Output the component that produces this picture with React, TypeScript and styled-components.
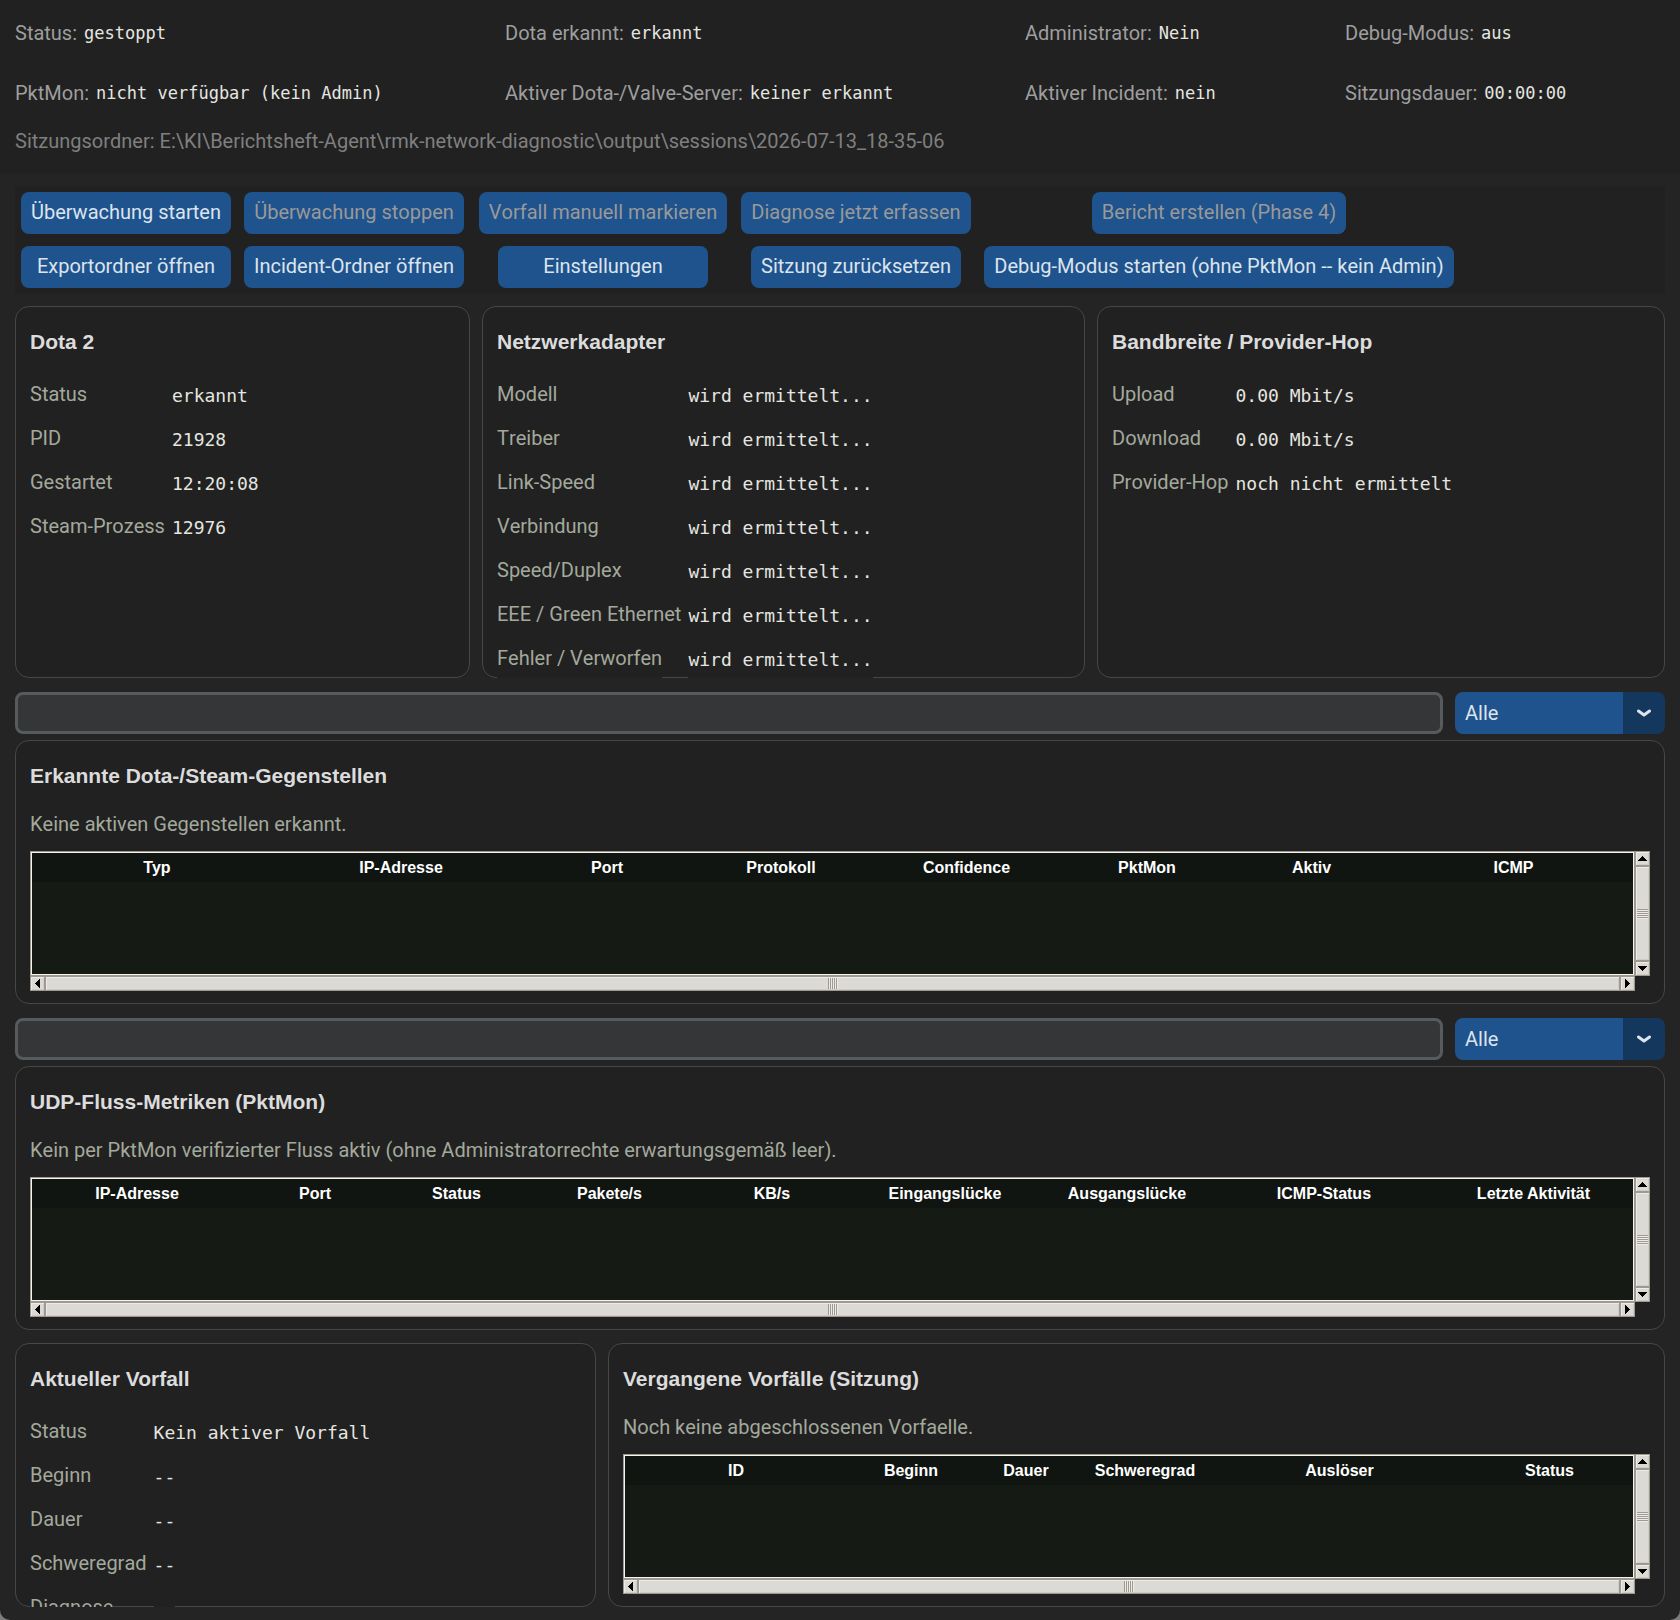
import React from "react";
import styled, { createGlobalStyle } from "styled-components";

const color = {
  desktop: "#7d7d7d",
  window: "#242424",
  frame: "#212121",
  cardBorder: "#474747",
  label: "#9e9e9e",
  path: "#7f7f7f",
  cardLabel: "#a3a99c",
  title: "#dcdcdc",
  value: "#e6e6e0",
  button: "#1f538d",
  buttonDark: "#14375e",
  buttonText: "#dce4ee",
  disabledText: "#999999",
  field: "#343638",
  fieldBorder: "#565b5e",
  tableHead: "#101511",
  tableBody: "#161a14",
  tableEdge: "#f6f3ec",
  bevel: "#9e9a91",
  bevelLight: "#eeebe7",
  bevelShade: "#cfcdc8",
  thumb: "#dcdad5",
};

const GlobalStyle = createGlobalStyle`
  *, *::before, *::after { box-sizing: border-box; }
  html, body { margin: 0; background: ${color.desktop}; }
  body, button, input, select {
    font-family: Roboto, "Liberation Sans", sans-serif;
    font-size: 20px;
    font-kerning: none;
  }
`;

const Window = styled.main`
  min-height: 100vh;
  padding-bottom: 12px;
  background: ${color.window};
  border-radius: 0 0 10px 10px;
`;

const StatusHeader = styled.header`
  padding: 3px 15px 15px;
  background: ${color.frame};
`;

const StatusGrid = styled.dl`
  display: grid;
  grid-template-columns: 490fr 520fr 320fr 320fr;
  grid-auto-rows: 60px;
  margin: 0;
`;

const StatusItem = styled.div`
  display: flex;
  align-items: center;
  gap: 7px;
  white-space: nowrap;
  dt { color: ${color.label}; }
  dd {
    margin: 0;
    color: ${color.value};
    font-family: "DejaVu Sans Mono", monospace;
    font-size: 17px;
  }
`;

const SessionPath = styled.p`
  margin: 0;
  line-height: 36px;
  color: ${color.path};
`;

const Content = styled.div`
  padding: 12px 15px 0;
`;

const Toolbar = styled.div`
  display: grid;
  grid-template-columns: 210px 222px 252px 230px 472px;
  grid-auto-rows: 42px;
  gap: 12px;
  justify-content: start;
  justify-items: center;
  padding: 6px;
  background: ${color.frame};
`;

const ToolButton = styled.button`
  min-width: 210px;
  padding: 0 10px 2px;
  border: 0;
  border-radius: 8px;
  background: ${color.button};
  color: ${color.buttonText};
  white-space: nowrap;
  &:disabled { color: ${color.disabledText}; }
`;

const CardRow = styled.div<{ $columns: string; $top: number }>`
  display: grid;
  grid-template-columns: ${(p) => p.$columns};
  gap: 12px;
  margin-top: ${(p) => p.$top}px;
`;

const Card = styled.section<{ $height: number }>`
  display: flex;
  flex-direction: column;
  min-width: 0;
  height: ${(p) => p.$height}px;
  padding: 14px 14px 0;
  border: 1px solid ${color.cardBorder};
  border-radius: 14px;
  background: ${color.frame};
`;

const CardTitle = styled.h2`
  margin: 0;
  color: ${color.title};
  font: bold 21px/42px "Liberation Sans", Arial, sans-serif;
`;

const FactList = styled.dl`
  flex: 1;
  min-height: 0;
  overflow: hidden;
  display: grid;
  grid-template-columns: auto 1fr;
  grid-auto-rows: 42px;
  gap: 2px 7px;
  justify-items: start;
  align-content: start;
  margin: 10px 0 -1px;
  line-height: 42px;
  white-space: nowrap;
  dt {
    background: ${color.frame};
    color: ${color.cardLabel};
  }
  dd {
    margin: 0;
    padding-top: 2px;
    background: ${color.frame};
    color: ${color.value};
    font: 18px/42px "DejaVu Sans Mono", monospace;
  }
`;

const Note = styled.p`
  margin: 6px 0;
  line-height: 42px;
  color: ${color.cardLabel};
`;

const FilterRow = styled.div`
  display: flex;
  gap: 12px;
  margin: 14px 0 6px;
`;

const FilterInput = styled.input`
  flex: 1;
  min-width: 0;
  height: 42px;
  padding: 0 10px;
  border: 3px solid ${color.fieldBorder};
  border-radius: 8px;
  background: ${color.field};
  color: ${color.buttonText};
`;

const SelectBox = styled.div`
  position: relative;
  width: 210px;
  height: 42px;
  svg {
    position: absolute;
    right: 14px;
    top: 17px;
    pointer-events: none;
  }
`;

const Select = styled.select`
  appearance: none;
  width: 100%;
  height: 100%;
  padding: 0 52px 0 10px;
  border: 0;
  border-radius: 8px;
  background: linear-gradient(to left, ${color.buttonDark} 42px, ${color.button} 42px);
  color: ${color.buttonText};
`;

const TreeGrid = styled.div`
  display: grid;
  grid-template-columns: 1fr 15px;
  grid-template-rows: 125px 15px;
`;

const TreeFrame = styled.div`
  border: 1px solid ${color.bevel};
  box-shadow: inset 0 0 0 1px ${color.tableEdge};
  padding: 1px;
  background: ${color.tableBody} content-box;
`;

const Tree = styled.table`
  width: 100%;
  table-layout: fixed;
  border-collapse: collapse;
  th {
    height: 29px;
    padding: 0;
    background: ${color.tableHead};
    color: #ffffff;
    font: bold 16px "Liberation Sans", Arial, sans-serif;
    text-align: center;
  }
`;

const ScrollTrack = styled.div<{ $vertical?: boolean }>`
  display: grid;
  ${(p) => (p.$vertical ? "grid-template-rows" : "grid-template-columns")}: 15px 1fr 15px;
`;

const ScrollPart = styled.button`
  display: flex;
  align-items: center;
  justify-content: center;
  min-width: 0;
  padding: 0;
  border: 1px solid ${color.bevel};
  background: ${color.thumb};
  box-shadow: inset 1px 1px 0 ${color.bevelLight}, inset -1px -1px 0 ${color.bevelShade};
`;

const Grip = styled.span<{ $vertical?: boolean }>`
  width: ${(p) => (p.$vertical ? 11 : 10)}px;
  height: ${(p) => (p.$vertical ? 10 : 11)}px;
  background: repeating-linear-gradient(
    ${(p) => (p.$vertical ? "to bottom" : "to right")},
    ${color.bevel} 0 1px,
    ${color.bevelLight} 1px 2px
  );
`;

const arrows = {
  up: "M4 0h1v1h1v1h1v1h1v1h1v1H0V4h1V3h1V2h1V1h1z",
  down: "M0 0h9v1H8v1H7v1H6v1H5v1H4V4H3V3H2V2H1V1H0z",
  left: "M0 4h1V3h1V2h1V1h1V0h1v9H4V8H3V7H2V6H1V5H0z",
  right: "M0 0h1v1h1v1h1v1h1v1h1v1H4v1H3v1H2v1H1v1H0z",
};

function Arrow({ dir }: { dir: keyof typeof arrows }) {
  const vertical = dir === "up" || dir === "down";
  return (
    <svg width={vertical ? 9 : 5} height={vertical ? 5 : 9} shapeRendering="crispEdges" aria-hidden="true">
      <path d={arrows[dir]} fill="#000" />
    </svg>
  );
}

function ScrollBar({ vertical }: { vertical?: boolean }) {
  return (
    <ScrollTrack $vertical={vertical}>
      <ScrollPart type="button" aria-label={vertical ? "Nach oben" : "Nach links"}>
        <Arrow dir={vertical ? "up" : "left"} />
      </ScrollPart>
      <ScrollPart as="div">
        <Grip $vertical={vertical} />
      </ScrollPart>
      <ScrollPart type="button" aria-label={vertical ? "Nach unten" : "Nach rechts"}>
        <Arrow dir={vertical ? "down" : "right"} />
      </ScrollPart>
    </ScrollTrack>
  );
}

type Column = [name: string, width: number];

function TreeView({ columns }: { columns: Column[] }) {
  const total = columns.reduce((sum, [, width]) => sum + width, 0);
  return (
    <TreeGrid>
      <TreeFrame>
        <Tree>
          <colgroup>
            {columns.map(([name, width]) => (
              <col key={name} style={{ width: `${(width / total) * 100}%` }} />
            ))}
          </colgroup>
          <thead>
            <tr>
              {columns.map(([name]) => (
                <th key={name} scope="col">{name}</th>
              ))}
            </tr>
          </thead>
        </Tree>
      </TreeFrame>
      <ScrollBar vertical />
      <ScrollBar />
    </TreeGrid>
  );
}

function Filter({ label }: { label: string }) {
  return (
    <FilterRow>
      <FilterInput type="text" aria-label={`${label} filtern`} />
      <SelectBox>
        <Select aria-label={`${label}: Auswahl`} defaultValue="Alle">
          <option>Alle</option>
        </Select>
        <svg width="14" height="9" viewBox="0 0 14 9" aria-hidden="true">
          <path d="M1.5 2 L7 6 L12.5 2" fill="none" stroke={color.buttonText} strokeWidth="3" strokeLinecap="round" strokeLinejoin="round" />
        </svg>
      </SelectBox>
    </FilterRow>
  );
}

type Fact = [label: string, value: string];

function FactCard({ title, facts, height }: { title: string; facts: Fact[]; height: number }) {
  return (
    <Card $height={height}>
      <CardTitle>{title}</CardTitle>
      <FactList>
        {facts.map(([label, value]) => (
          <React.Fragment key={label}>
            <dt>{label}</dt>
            <dd>{value}</dd>
          </React.Fragment>
        ))}
      </FactList>
    </Card>
  );
}

function TreeCard({ title, note, columns }: { title: string; note: string; columns: Column[] }) {
  return (
    <Card $height={264}>
      <CardTitle>{title}</CardTitle>
      <Note>{note}</Note>
      <TreeView columns={columns} />
    </Card>
  );
}

const status: Fact[] = [
  ["Status:", "gestoppt"],
  ["Dota erkannt:", "erkannt"],
  ["Administrator:", "Nein"],
  ["Debug-Modus:", "aus"],
  ["PktMon:", "nicht verfügbar (kein Admin)"],
  ["Aktiver Dota-/Valve-Server:", "keiner erkannt"],
  ["Aktiver Incident:", "nein"],
  ["Sitzungsdauer:", "00:00:00"],
];

const actions: [text: string, disabled: boolean][] = [
  ["Überwachung starten", false],
  ["Überwachung stoppen", true],
  ["Vorfall manuell markieren", true],
  ["Diagnose jetzt erfassen", true],
  ["Bericht erstellen (Phase 4)", true],
  ["Exportordner öffnen", false],
  ["Incident-Ordner öffnen", false],
  ["Einstellungen", false],
  ["Sitzung zurücksetzen", false],
  ["Debug-Modus starten (ohne PktMon -- kein Admin)", false],
];

const pending = "wird ermittelt...";

const dotaFacts: Fact[] = [
  ["Status", "erkannt"],
  ["PID", "21928"],
  ["Gestartet", "12:20:08"],
  ["Steam-Prozess", "12976"],
];

const adapterFacts: Fact[] = [
  ["Modell", pending],
  ["Treiber", pending],
  ["Link-Speed", pending],
  ["Verbindung", pending],
  ["Speed/Duplex", pending],
  ["EEE / Green Ethernet", pending],
  ["Fehler / Verworfen", pending],
];

const bandwidthFacts: Fact[] = [
  ["Upload", "0.00 Mbit/s"],
  ["Download", "0.00 Mbit/s"],
  ["Provider-Hop", "noch nicht ermittelt"],
];

const incidentFacts: Fact[] = [
  ["Status", "Kein aktiver Vorfall"],
  ["Beginn", "--"],
  ["Dauer", "--"],
  ["Schweregrad", "--"],
  ["Diagnose", "--"],
];

const peerColumns: Column[] = [
  ["Typ", 250],
  ["IP-Adresse", 238],
  ["Port", 174],
  ["Protokoll", 174],
  ["Confidence", 197],
  ["PktMon", 164],
  ["Aktiv", 165],
  ["ICMP", 239],
];

const flowColumns: Column[] = [
  ["IP-Adresse", 210],
  ["Port", 146],
  ["Status", 137],
  ["Pakete/s", 169],
  ["KB/s", 156],
  ["Eingangslücke", 190],
  ["Ausgangslücke", 174],
  ["ICMP-Status", 220],
  ["Letzte Aktivität", 199],
];

const historyColumns: Column[] = [
  ["ID", 222],
  ["Beginn", 128],
  ["Dauer", 102],
  ["Schweregrad", 136],
  ["Auslöser", 253],
  ["Status", 167],
];

export default function App() {
  return (
    <>
      <GlobalStyle />
      <Window>
        <StatusHeader>
          <StatusGrid>
            {status.map(([label, value]) => (
              <StatusItem key={label}>
                <dt>{label}</dt>
                <dd>{value}</dd>
              </StatusItem>
            ))}
          </StatusGrid>
          <SessionPath>
            {"Sitzungsordner: E:\\KI\\Berichtsheft-Agent\\rmk-network-diagnostic\\output\\sessions\\2026-07-13_18-35-06"}
          </SessionPath>
        </StatusHeader>
        <Content>
          <Toolbar>
            {actions.map(([text, disabled]) => (
              <ToolButton key={text} type="button" disabled={disabled}>{text}</ToolButton>
            ))}
          </Toolbar>
          <CardRow $columns="455fr 603fr 568fr" $top={12}>
            <FactCard title="Dota 2" facts={dotaFacts} height={372} />
            <FactCard title="Netzwerkadapter" facts={adapterFacts} height={372} />
            <FactCard title="Bandbreite / Provider-Hop" facts={bandwidthFacts} height={372} />
          </CardRow>
          <Filter label="Gegenstellen" />
          <TreeCard
            title="Erkannte Dota-/Steam-Gegenstellen"
            note="Keine aktiven Gegenstellen erkannt."
            columns={peerColumns}
          />
          <Filter label="UDP-Flüsse" />
          <TreeCard
            title="UDP-Fluss-Metriken (PktMon)"
            note="Kein per PktMon verifizierter Fluss aktiv (ohne Administratorrechte erwartungsgemäß leer)."
            columns={flowColumns}
          />
          <CardRow $columns="581fr 1057fr" $top={13}>
            <FactCard title="Aktueller Vorfall" facts={incidentFacts} height={264} />
            <TreeCard
              title="Vergangene Vorfälle (Sitzung)"
              note="Noch keine abgeschlossenen Vorfaelle."
              columns={historyColumns}
            />
          </CardRow>
        </Content>
      </Window>
    </>
  );
}
